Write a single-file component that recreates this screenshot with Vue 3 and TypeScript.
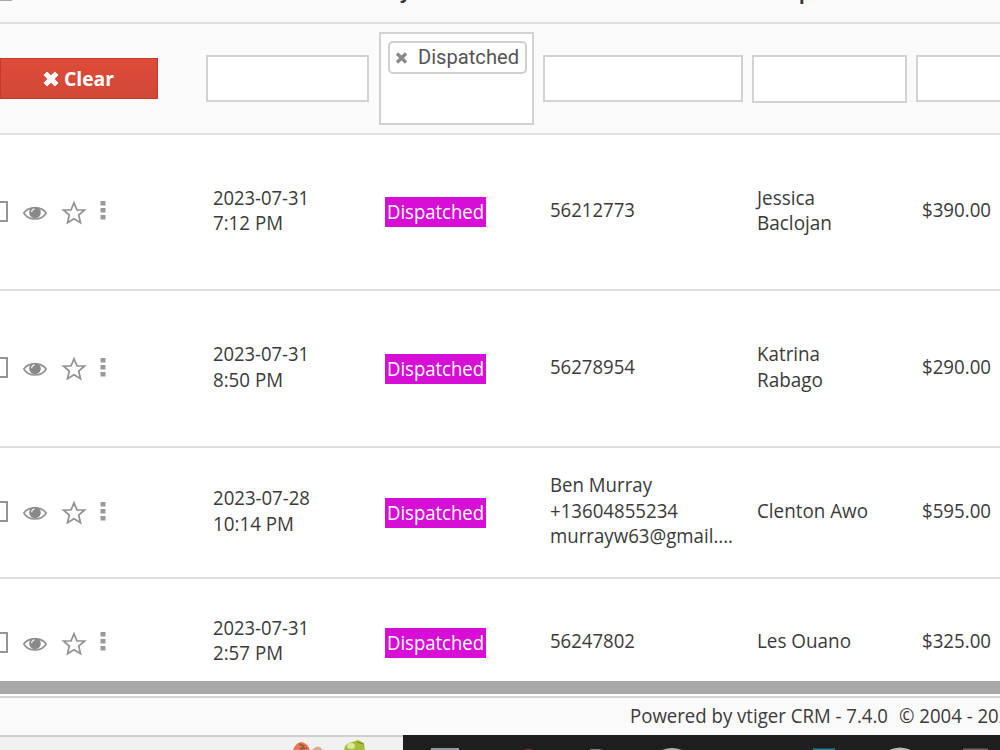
<script setup lang="ts">
interface Line { text: string; width: number }
interface Row { id: string; kind: string; date: Line[]; contact: Line[]; owner: Line[]; amount: string }

const rows: Row[] = [
  { id: 'r1', kind: 'tall', date: [{ text: '2023-07-31', width: 96 }, { text: '7:12 PM', width: 70 }], contact: [{ text: '56212773', width: 85 }], owner: [{ text: 'Jessica', width: 58 }, { text: 'Baclojan', width: 75 }], amount: '$390.00' },
  { id: 'r2', kind: 'tall second', date: [{ text: '2023-07-31', width: 96 }, { text: '8:50 PM', width: 70 }], contact: [{ text: '56278954', width: 85 }], owner: [{ text: 'Katrina', width: 63 }, { text: 'Rabago', width: 66 }], amount: '$290.00' },
  { id: 'r3', kind: 'medium', date: [{ text: '2023-07-28', width: 97 }, { text: '10:14 PM', width: 81 }], contact: [{ text: 'Ben Murray', width: 102 }, { text: '+13604855234', width: 128 }, { text: 'murrayw63@gmail....', width: 183 }], owner: [{ text: 'Clenton Awo', width: 111 }], amount: '$595.00' },
  { id: 'r4', kind: 'last', date: [{ text: '2023-07-31', width: 96 }, { text: '2:57 PM', width: 70 }], contact: [{ text: '56247802', width: 85 }], owner: [{ text: 'Les Ouano', width: 94 }], amount: '$325.00' },
]
</script>

<template>
  <div class="page">
    <div class="list">
      <div class="head cols">
        <div class="head-check"></div><div></div>
        <div><b class="tail-y">y</b></div><div></div>
        <div><b class="tail-p">p</b></div><div></div>
      </div>
      <div class="filters">
        <button class="clear">
          <svg width="16" height="16" viewBox="0 0 16 16"><path d="M4.1 1 8 4.8 11.9 1 15 4.1 11.2 8 15 11.9 11.9 15 8 11.2 4.1 15 1 11.9 4.8 8 1 4.1Z" fill="#fff" stroke="#fff" stroke-linejoin="round" /></svg>
          <svg class="clear-label" width="52" height="26"><text x="0" y="19.500" textLength="50" lengthAdjust="spacingAndGlyphs">Clear</text></svg>
        </button>
        <div class="box date-box"></div>
        <div class="box select">
          <div class="tag">
            <svg width="13" height="12" viewBox="0 0 13 12"><path d="M2 1.5 11 10.5M11 1.5 2 10.5" stroke="#8b8b8b" stroke-width="3.4" /></svg>
            <svg class="tag-label" width="104" height="26"><text x="0" y="19" textLength="101" lengthAdjust="spacingAndGlyphs">Dispatched</text></svg>
          </div>
        </div>
        <div class="box contact-box"></div>
        <div class="box owner-box"></div>
        <div class="box amount-box"></div>
      </div>
      <div v-for="row in rows" :key="row.id" class="row cols" :class="row.kind">
        <div class="actions">
          <i class="check"></i>
          <svg class="eye" width="24" height="18" viewBox="0 0 24 18">
            <path d="M.8 9C5.5 2.2 18.500 2.200 23.200 9 18.500 17 5.500 17 .8 9Z" fill="#fff" stroke="#929292" stroke-width="1.6" />
            <circle cx="12" cy="8.500" r="5.800" fill="#888" />
            <path d="M8.600 8.200Q8.800 5.200 11.700 4.900" fill="none" stroke="#eee" stroke-width="1.200" />
          </svg>
          <svg class="star" width="24" height="24" viewBox="0 0 24 24"><path d="M12 1.800 15 9H22.500L16.700 14 18.500 21.700 12 17.800 5.500 21.700 7.300 14 1.500 9H9Z" fill="none" stroke="#929292" stroke-width="1.700" /></svg>
          <svg class="dots" width="6" height="20" viewBox="0 0 6 20"><path d="M.5 1h5v4.500h-5ZM.5 8h5v4.500h-5ZM.5 15h5v4.500h-5Z" fill="#999" /></svg>
        </div>
        <div class="cell date">
          <svg v-for="line in row.date" :key="line.text" class="line"><text x="0" y="18" :textLength="line.width" lengthAdjust="spacingAndGlyphs">{{ line.text }}</text></svg>
        </div>
        <div class="cell status">
          <span class="badge"><svg width="98" height="28"><text x="0" y="21" textLength="97" lengthAdjust="spacingAndGlyphs">Dispatched</text></svg></span>
        </div>
        <div class="cell">
          <svg v-for="line in row.contact" :key="line.text" class="line"><text x="0" y="18" :textLength="line.width" lengthAdjust="spacingAndGlyphs">{{ line.text }}</text></svg>
        </div>
        <div class="cell">
          <svg v-for="line in row.owner" :key="line.text" class="line"><text x="0" y="18" :textLength="line.width" lengthAdjust="spacingAndGlyphs">{{ line.text }}</text></svg>
        </div>
        <div class="cell">
          <svg class="line"><text x="0" y="18" textLength="69" lengthAdjust="spacingAndGlyphs">{{ row.amount }}</text></svg>
        </div>
      </div>
    </div>
    <div class="scrollbar"></div>
    <footer class="footer">
      <svg width="370" height="30"><text x="0" y="22" textLength="258" lengthAdjust="spacingAndGlyphs">Powered by vtiger CRM - 7.4.0</text><text x="269" y="22" textLength="121" lengthAdjust="spacingAndGlyphs">© 2004 - 2023</text></svg>
    </footer>
    <div class="taskbar">
      <div class="tray">
        <svg width="403" height="15" viewBox="0 0 403 15">
          <path d="M293 15Q296 7 302 7 308 9 310 15Z" fill="#e8794f" /><path d="M299 9 304 11 300 14 307 13" fill="none" stroke="#965941" stroke-width="1.500" />
          <path d="M312 15Q318 8 323 15Z" fill="#dba98c" />
          <path d="M344 15Q345 8 352 7L358 5 364 8 365 15Z" fill="#a8be38" /><ellipse cx="351" cy="11" rx="4" ry="3" fill="#dce896" /><path d="M357 7 363 9" stroke="#71882a" />
        </svg>
      </div>
      <div class="apps">
        <svg width="597" height="15" viewBox="403 0 597 15">
          <path d="M431 13h28v2h-28Z" fill="#9299a0" /><path d="M524 15q5-2 9 0Z" fill="#873c36" /><path d="M590 14h9l4 1h-13Z" fill="#777c81" />
          <path d="M662 15q10-4 20 0Z" fill="#a6b2bb" /><path d="M813 13.500h22V15h-22Z" fill="#258599" /><path d="M889 15q11-5 22 0Z" fill="#b7b7b7" /><path d="M963 13.500h25V15h-25Z" fill="#6e6262" />
        </svg>
      </div>
    </div>
  </div>
</template>

<style>
html, body { margin: 0; overflow: hidden; }
</style>
<style scoped>
* { box-sizing: border-box; }
.page { width: 1000px; height: 750px; overflow: hidden; display: flex; flex-direction: column; background: #fff; font-family: "Open Sans", sans-serif; font-size: 19.4px; color: #3a3a3a; }
svg { display: block; flex: none; overflow: visible; }
text { fill: #3b3b3b; }
.list { height: 681px; overflow: hidden; flex: none; }
.cols { display: grid; grid-template-columns: 213px 172px 165px 207px 165px 78px; }
.head { height: 24px; overflow: hidden; background: #fafafa; border-bottom: 2px solid #dedede; }
.head b { display: block; font-size: 18.4px; line-height: 26px; margin-top: -21px; color: #333; }
.tail-y { padding-left: 15px; }
.head .tail-p { padding-left: 42px; margin-top: -20px; }
.head-check { width: 12px; height: 1px; background: #aaa; }
.filters { height: 111px; display: flex; align-items: flex-start; background: #fafafa; border-bottom: 2px solid #e0e0e0; }
.clear { flex: none; width: 158px; height: 41px; margin: 34px 49px 0 0; padding: 0 0 0 42px; display: flex; align-items: center; gap: 5px; border: 1px solid #c7382d; background: linear-gradient(#df4b39, #d14836); }
.clear-label text { fill: #fff; font: bold 19.4px "Open Sans", sans-serif; }
.box { flex: none; height: 47px; margin-top: 31px; border: 2px solid #d2d2d2; background: #fff; }
.date-box { width: 163px; margin-left: -1px; }
.select { width: 155px; height: 93px; margin: 8px 0 0 10px; padding: 7px; }
.tag { width: 139px; height: 33px; padding-left: 5px; display: flex; align-items: center; gap: 10px; border: 2px solid #d0d0d0; border-radius: 5px; }
.tag-label text { font: 20.5px Roboto, sans-serif; fill: #555; }
.contact-box { width: 200px; margin-left: 9px; }
.owner-box { width: 155px; height: 48px; margin-left: 9px; }
.amount-box { width: 100px; margin-left: 9px; }
.row { height: 156px; align-items: center; border-bottom: 2px solid #dedede; }
.second { height: 157px; }
.medium { height: 131px; }
.last { height: 130px; }
.last .date { margin-top: -2px; }
.line { width: 190px; height: 25.5px; }
.actions { display: flex; align-items: center; margin-top: -2px; }
.check { width: 8px; height: 21px; border: 2px solid #959595; border-left: 0; }
.eye { margin-left: 15px; margin-top: 3px; }
.star { margin-left: 15px; margin-top: 3px; }
.dots { margin-left: 14px; margin-top: -2px; }
.badge { display: block; width: 101px; height: 30px; padding: 1px 2px; background: #d60ed6; }
.badge text { fill: #fff; }
.scrollbar { height: 13px; flex: none; background: #a9a9a9; }
.footer { height: 41px; flex: none; margin-top: 2px; padding: 3px 0 0 630px; border-top: 2px solid #d5d5d5; background: #fafafa; }
.taskbar { height: 15px; margin-top: -2px; display: flex; flex: none; }
.tray { width: 403px; height: 15px; background: #f1f1f1; border-top: 2px solid #cecece; }
.tray svg { margin-top: -2px; }
.apps { width: 597px; background: #1e1e1e; }
</style>
